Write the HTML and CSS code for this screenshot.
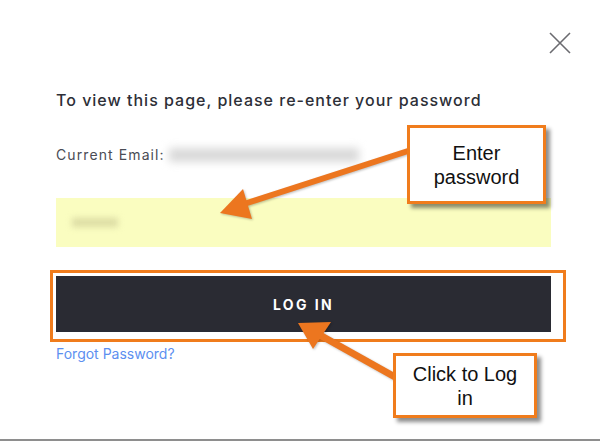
FILE: index.html
```html
<!DOCTYPE html>
<html lang="en">
<head>
  <meta charset="UTF-8" />
  <meta name="viewport" content="width=device-width, initial-scale=1.0" />
  <title>Re-enter password</title>
  <link rel="stylesheet" href="styles.css">
</head>
<body>
  <div class="modal">
    <div class="close-row">
      <svg class="close" width="22" height="22" viewBox="0 0 22 22">
        <path d="M1 1 L21 21 M21 1 L1 21" stroke="#6b6b70" stroke-width="1.6" fill="none" />
      </svg>
    </div>

    <h1>To view this page, please re-enter your password</h1>

    <div class="email-row">
      <span>Current Email:</span>
      <span class="blurred-email"></span>
    </div>

    <div class="password-input">
      <span class="blurred-pass"></span>
    </div>

    <div class="highlight">
      <button class="login-btn">LOG IN</button>
    </div>

    <a class="forgot" href="#">Forgot Password?</a>

    <!-- annotations -->
    <svg class="arrows" width="600" height="441" viewBox="0 0 600 441">
      <line x1="408" y1="151" x2="244" y2="204" stroke="#ec761f" stroke-width="6" />
      <polygon points="220,213 243,189 252,219" fill="#ec761f" />
      <line x1="395" y1="377" x2="318" y2="334" stroke="#ec761f" stroke-width="7" />
      <polygon points="298,323 331,322 313,349" fill="#ec761f" />
    </svg>

    <div class="callout callout-enter">Enter<br>password</div>
    <div class="callout callout-login">Click to Log<br>in</div>
  </div>
</body>
</html>
```

FILE: styles.css
```css
body {
  margin: 0;
  background-color: #ffffff;
  font-family: Inter, "Noto Sans", sans-serif;
}
.modal {
  position: relative;
  box-sizing: border-box;
  width: 600px;
  height: 441px;
  padding: 32px 49px 0 56px;
  border-bottom: 2px solid #8e8e8e;
}
.close-row {
  display: flex;
  justify-content: flex-end;
  margin-right: -20px;
}
.close {
  display: block;
}
h1 {
  margin: 36px 0 0;
  font-size: 16px;
  line-height: 20px;
  font-weight: 500;
  letter-spacing: 1px;
  color: #2d2f37;
}
.email-row {
  display: flex;
  align-items: center;
  margin-top: 36px;
  font-size: 14px;
  line-height: 18px;
  letter-spacing: 1.1px;
  color: #4a4c55;
}
.blurred-email {
  width: 190px;
  height: 14px;
  margin-left: 4px;
  background-color: #d9d9d9;
  filter: blur(4px);
}
.password-input {
  display: flex;
  align-items: center;
  height: 49px;
  margin-top: 34px;
  padding-left: 16px;
  background-color: #fafdc0;
}
.blurred-pass {
  width: 46px;
  height: 9px;
  background-color: #dcdca4;
  filter: blur(3px);
}
.highlight {
  margin: 23px -15px 0 -6px;
  padding: 3px 12px 7px 3px;
  border: 3px solid #f07c1c;
}
.login-btn {
  display: block;
  width: 100%;
  height: 56px;
  border: none;
  background-color: #2a2b33;
  color: #ffffff;
  font-family: Inter, "Noto Sans", sans-serif;
  font-size: 14px;
  font-weight: 700;
  letter-spacing: 2.4px;
  cursor: pointer;
}
.forgot {
  display: inline-block;
  margin-top: 3px;
  font-size: 14px;
  line-height: 18px;
  color: #5c8ff0;
  text-decoration: none;
}
.arrows {
  position: absolute;
  left: 0;
  top: 0;
  pointer-events: none;
  filter: drop-shadow(1px 1px 1px rgba(0, 0, 0, 0.25));
}
.callout {
  position: absolute;
  box-sizing: border-box;
  display: flex;
  align-items: center;
  justify-content: center;
  text-align: center;
  background-color: #ffffff;
  border: 3px solid #f07c1c;
  box-shadow: 4px 4px 4px rgba(0, 0, 0, 0.45);
  font-family: "Liberation Sans", Arial, sans-serif;
  font-size: 20px;
  line-height: 24px;
  color: #111111;
}
.callout-enter {
  left: 407px;
  top: 125px;
  width: 139px;
  height: 79px;
}
.callout-login {
  left: 393px;
  top: 353px;
  width: 144px;
  height: 65px;
}
```
